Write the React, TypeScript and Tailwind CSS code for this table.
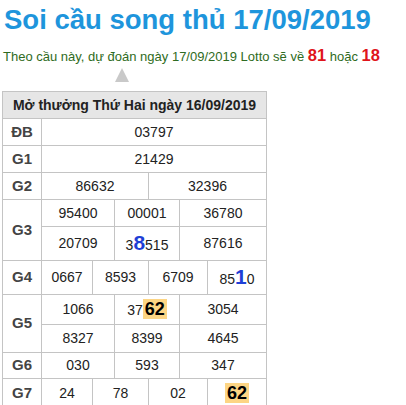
const hl = "bg-[#fdd584] px-[2px] text-[18px] font-bold text-black";
const big = "text-[21px] font-bold leading-none text-[#1f3fd6]";

const td = "border border-[#c4c4c4] text-center align-middle";
const label = "border border-[#c4c4c4] text-center align-middle text-[15px] font-bold text-[#444]";

export default function App() {
  return (
    <div className="h-[405px] w-[406px] overflow-hidden bg-white pl-[2px] font-['Liberation_Sans',Arial,sans-serif]">
      <h1 className="whitespace-nowrap pl-[2px] pt-[2px] text-[27.5px] font-bold leading-[36px] text-[#1e95dc]">Soi cầu song thủ 17/09/2019</h1>
      <p className="mt-[8px] whitespace-nowrap pl-[1px] text-[13px] leading-[18px] text-[#2f6b22]">
        Theo cầu này, dự đoán ngày 17/09/2019 Lotto sẽ về <b className="text-[16.5px] text-[#e0141b]">81</b> hoặc{" "}
        <b className="text-[16.5px] text-[#e0141b]">18</b>
      </p>
      <div className="ml-[113px] mt-[2px] h-0 w-0 border-x-[7.5px] border-b-[14px] border-x-transparent border-b-[#c9c9c9]" />
      <table className="mt-[9px] w-[264px] table-fixed border-collapse text-[14px] text-[#222]">
        <colgroup>
          <col className="w-[39px]" />
          <col className="w-[51px]" />
          <col className="w-[22px]" />
          <col className="w-[34px]" />
          <col className="w-[31px]" />
          <col className="w-[28px]" />
          <col className="w-[59px]" />
        </colgroup>
        <tbody>
          <tr className="h-[27px]">
            <th colSpan={7} className="border border-[#c4c4c4] bg-[#e6e6e6] text-center text-[14px] font-bold text-[#222]">
              Mở thưởng Thứ Hai ngày 16/09/2019
            </th>
          </tr>
          <tr className="h-[27px]">
            <td className={label}>ĐB</td>
            <td colSpan={6} className={td}>03797</td>
          </tr>
          <tr className="h-[27px]">
            <td className={label}>G1</td>
            <td colSpan={6} className={td}>21429</td>
          </tr>
          <tr className="h-[27px]">
            <td className={label}>G2</td>
            <td colSpan={3} className={td}>86632</td>
            <td colSpan={3} className={td}>32396</td>
          </tr>
          <tr className="h-[27px]">
            <td rowSpan={2} className={label}>G3</td>
            <td colSpan={2} className={td}>95400</td>
            <td colSpan={2} className={td}>00001</td>
            <td colSpan={2} className={td}>36780</td>
          </tr>
          <tr className="h-[34px]">
            <td colSpan={2} className={td}>20709</td>
            <td colSpan={2} className={td}>
              3<span className={big}>8</span>515
            </td>
            <td colSpan={2} className={td}>87616</td>
          </tr>
          <tr className="h-[34px]">
            <td className={label}>G4</td>
            <td className={td}>0667</td>
            <td colSpan={2} className={td}>8593</td>
            <td colSpan={2} className={td}>6709</td>
            <td className={td}>
              85<span className={big}>1</span>0
            </td>
          </tr>
          <tr className="h-[30px]">
            <td rowSpan={2} className={label}>G5</td>
            <td colSpan={2} className={td}>1066</td>
            <td colSpan={2} className={td}>
              37<span className={hl}>62</span>
            </td>
            <td colSpan={2} className={td}>3054</td>
          </tr>
          <tr className="h-[28px]">
            <td colSpan={2} className={td}>8327</td>
            <td colSpan={2} className={td}>8399</td>
            <td colSpan={2} className={td}>4645</td>
          </tr>
          <tr className="h-[26px]">
            <td className={label}>G6</td>
            <td colSpan={2} className={td}>030</td>
            <td colSpan={2} className={td}>593</td>
            <td colSpan={2} className={td}>347</td>
          </tr>
          <tr className="h-[30px]">
            <td className={label}>G7</td>
            <td className={td}>24</td>
            <td colSpan={2} className={td}>78</td>
            <td colSpan={2} className={td}>02</td>
            <td className={td}>
              <span className={hl}>62</span>
            </td>
          </tr>
        </tbody>
      </table>
    </div>
  );
}
